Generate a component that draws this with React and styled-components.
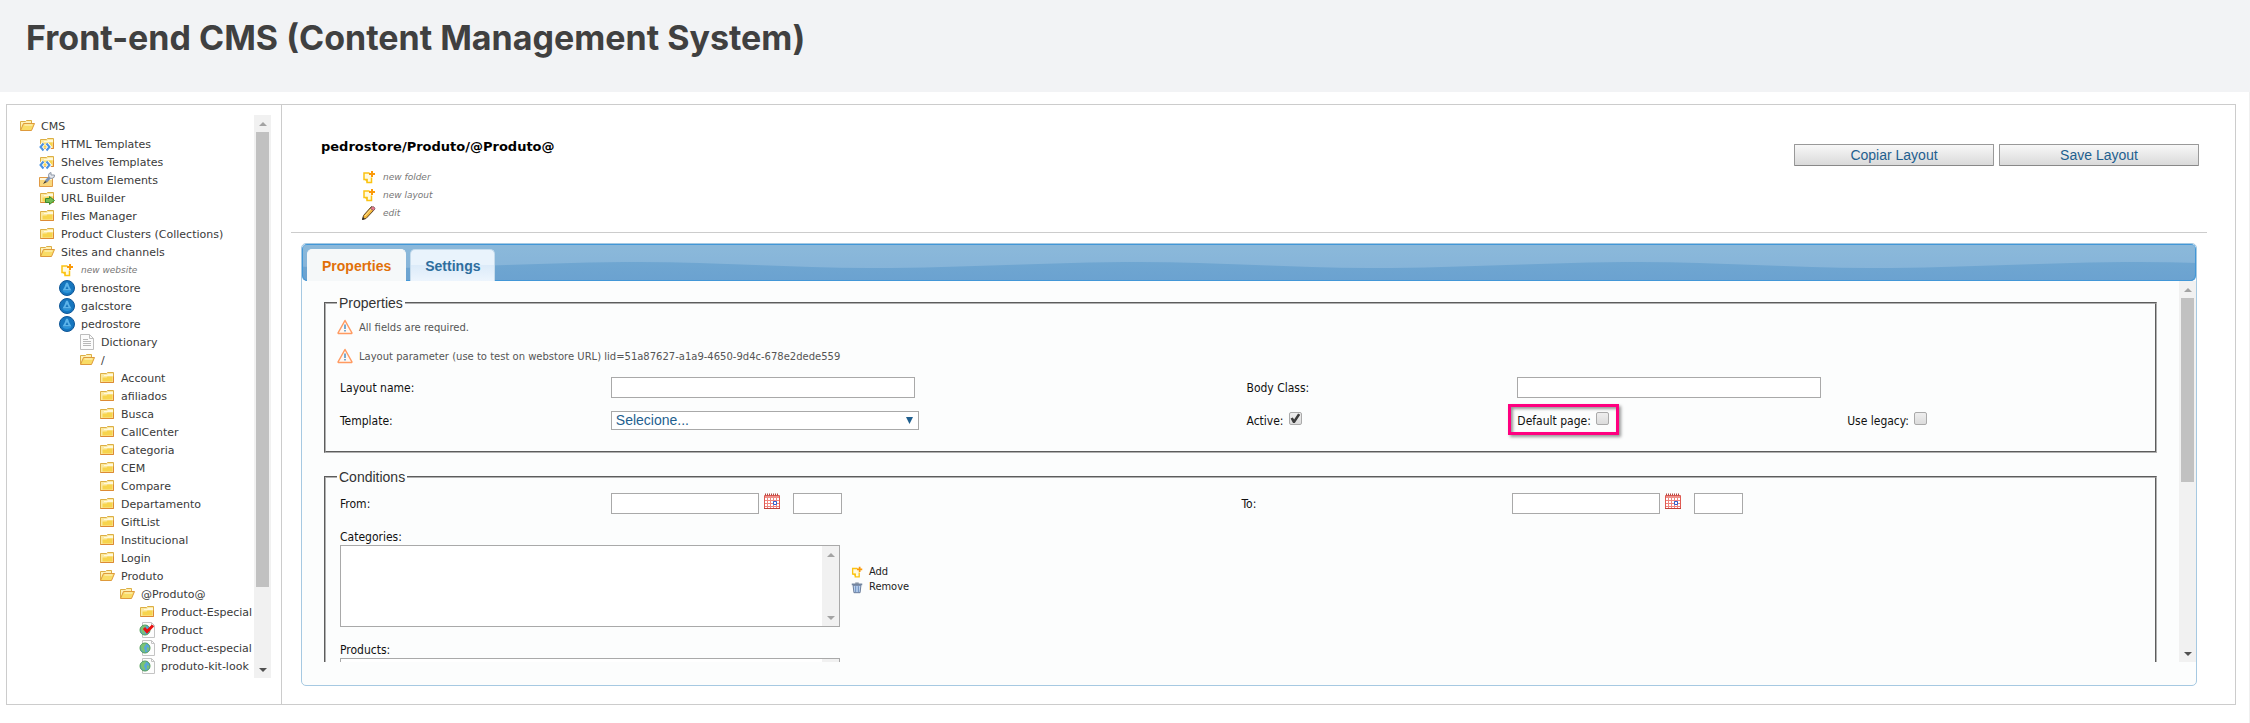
import React from "react";
import styled, { createGlobalStyle, css } from "styled-components";

const verdana = `Verdana, "DejaVu Sans", sans-serif`;
const tahoma = `Tahoma, "DejaVu Sans Condensed", "DejaVu Sans", sans-serif`;
const arial = `"Liberation Sans", Arial, sans-serif`;

const GlobalStyle = createGlobalStyle`
  *, *::before, *::after { box-sizing: border-box; }
  body { margin: 0; background: #fff; color: #3a3a3a; font-family: ${verdana}; font-size: 11px; }
  a { color: inherit; text-decoration: none; }
`;

/* ---------- page shell ---------- */

const Banner = styled.header`
  background: #f2f3f5;
  padding: 16px 26px 32px;
`;

const Title = styled.h1`
  margin: 0;
  color: #404040;
  font: 700 34px/44px Inter, sans-serif;
`;

const Page = styled.div`
  padding: 12px 13px 18px 6px;
  border-right: 1px solid #f0f0f0;
`;

const Frame = styled.div`
  display: flex;
  border: 1px solid #ccc;
`;

/* ---------- scroll bar ---------- */

const Bar = styled.div`
  flex: none;
  display: flex;
  flex-direction: column;
  width: 17px;
  background: #f1f1f1;
`;

const Track = styled.div`
  flex: 1;
  padding: 0 2px;
`;

const Thumb = styled.div`
  height: ${(p) => p.$size};
  background: #c1c1c1;
`;

const ArrowBox = styled.span`
  display: flex;
  align-items: center;
  justify-content: center;
  height: 17px;
`;

const Arrow = ({ down, color }) => (
  <ArrowBox>
    <svg width="8" height="4" viewBox="0 0 8 4" aria-hidden="true">
      <path d={down ? "M0 0h8L4 4z" : "M0 4h8L4 0z"} fill={color} />
    </svg>
  </ArrowBox>
);

const Scrollbar = ({ size }) => (
  <Bar aria-hidden="true">
    <Arrow color="#a3a3a3" />
    <Track>{size && <Thumb $size={size} />}</Track>
    <Arrow down color={size ? "#505050" : "#a3a3a3"} />
  </Bar>
);

/* ---------- icons ---------- */

const FolderShape = () => (
  <>
    <path d="M1.5 3.5v9h13v-10h-6l-1 1z" fill="#fbe9a0" stroke="#dcae45" />
    <path d="M2 5h3v1h9V4H9l-1 1z" fill="#fff8dc" />
    <path d="M3.500 7.500h4l1-1h5v5h-10z" fill="#f7d44c" />
    <path d="M1.500 12.500h13v-6" fill="none" stroke="#dd8a35" />
  </>
);

const icons = {
  folder: <FolderShape />,
  open: (
    <>
      <path d="M1.500 12V3.500h5l1-1h5v3" fill="#fdf0b4" stroke="#dcae45" />
      <path d="M4.500 5.500h11l-3 7h-11z" fill="#f9dc66" stroke="#de9a3c" />
      <path d="M5.500 7h8" stroke="#fff6cf" />
    </>
  ),
  template: (
    <>
      <FolderShape />
      <path d="M4.500 7.500L1.500 11l3 3.500M7.500 7.500l3 3.500-3 3.500" fill="none" stroke="#fff" strokeWidth="4" />
      <path d="M4.500 7.500L1.500 11l3 3.500M7.500 7.500l3 3.500-3 3.500" fill="none" stroke="#4b92e0" strokeWidth="2" />
    </>
  ),
  custom: (
    <>
      <path d="M.5 5.500h13v9H.5z" fill="#f9d77c" stroke="#e09a45" />
      <path d="M1 6h12v2H1z" fill="#fff6d8" />
      <path d="M7 9.500l4-4.500" stroke="#7b93b8" strokeWidth="3" />
      <path d="M15.500 3a3 3 0 1 1-3.500-2.500v2.500h2z" fill="#e4e8ee" stroke="#8d96a5" />
      <path d="M4 12l2-3 2 1z" fill="#333" />
    </>
  ),
  export: (
    <>
      <FolderShape />
      <path d="M6.500 8.500h4v-2l5 4-5 4v-2h-4z" fill="#74bd52" stroke="#3c8a2e" />
    </>
  ),
  add: (
    <>
      <path d="M8.500 4H3v6.500h3v3h4.500V8.500" fill="#fffbe0" stroke="#fbc313" strokeWidth="1.500" />
      <path d="M3 10h3.500v3.500z" fill="#fbc313" />
      <path d="M11 2v6M8 5h6" stroke="#fb9a0a" strokeWidth="2" />
    </>
  ),
  store: (
    <>
      <circle cx="8" cy="8" r="7.500" fill="#1676be" stroke="#0f5596" />
      <path d="M8 2.500c1.500 0 1.500 2.500 2.500 4.500l2 3.500h-9l2-3.500C6.500 5 6.500 2.500 8 2.500z" fill="#5cb4ea" />
      <path d="M3.500 11h9c-2 2.500-7 2.500-9 0z" fill="#2a94da" />
      <path d="M8 6l1.500 3h-3z" fill="#1676be" />
    </>
  ),
  doc: (
    <>
      <path d="M1.500.5h9l4 4v11h-13z" fill="#fcfcfc" stroke="#bdbdbd" />
      <path d="M10.500.5v4h4" fill="none" stroke="#bdbdbd" />
      <path d="M4 5.500h5M4 7.500h8M4 9.500h8M4 11.500h8" stroke="#b8b8b8" />
    </>
  ),
  web: (
    <>
      <path d="M3.500.5h9l3 3v12h-12z" fill="#fdfdfd" stroke="#c4c4c4" />
      <path d="M12.500.5v3h3" fill="none" stroke="#c4c4c4" />
      <circle cx="6" cy="8" r="5" fill="#58a6da" stroke="#4f9d4f" />
      <path d="M2 6c1-3 5-3 5-2S5 6 5 8s2 2 1 4c-3 0-4-3-4-6zM8 7l2 1c0 2-1 3-2 3z" fill="#7cc470" />
    </>
  ),
  pencil: (
    <>
      <path d="M1.500 14.500l1-4 8-9 3 3-8.500 9z" fill="#f5b83c" stroke="#5c4423" />
      <path d="M4 11l7-8" stroke="#ffe69a" />
      <path d="M10.500 2.500c1-2 4.500 0 3 2l-1 1-3-2z" fill="#f0788a" stroke="#87606c" />
      <path d="M1 15l1-3 2 2z" fill="#2b2b2b" />
    </>
  ),
  alert: (
    <>
      <path d="M8 1.500L15 14a1 1 0 0 1-.5.5h-13A1 1 0 0 1 1 14z" fill="#fff8f3" stroke="#ff9a61" strokeWidth="1.500" strokeLinejoin="round" />
      <path d="M8 5.500v4.500M8 11v1.500" stroke="#4d8fc4" strokeWidth="1.500" />
    </>
  ),
  calendar: (
    <>
      <path d="M.5 2.500h15v13H.5z" fill="#fff" stroke="#df5a52" />
      <path d="M1 3h14v2H1z" fill="#f0908a" />
      <path d="M1 1.500h14" stroke="#b04a44" strokeWidth="2" strokeDasharray="1 1" />
      <path d="M3.500 5v10M6.500 5v10M9.500 5v10M12.500 5v10M1 7.500h14M1 10.500h14M1 13.500h14" stroke="#f0857e" />
      <path d="M9.500 8.500h3v3h-3z" fill="#fff" stroke="#2f5fd0" />
      <path d="M0 15.500h16" stroke="#c0403a" />
    </>
  ),
  trash: (
    <>
      <path d="M3.500 6h9l-1 8.500h-7z" fill="#bcd2ee" stroke="#5b6f8f" />
      <path d="M6.500 7v7M9.500 7v7" stroke="#5f83b8" />
      <path d="M2 5h12" stroke="#7486a0" strokeWidth="2" />
      <path d="M6 3.500h4" stroke="#56657c" />
    </>
  ),
};
icons.checked = (
  <>
    {icons.web}
    <path d="M5 6l3 3.500 6-6" fill="none" stroke="#ea1010" strokeWidth="3" />
  </>
);

const IconSvg = styled.svg`
  flex: none;
  display: block;
`;

const Icon = ({ name, size = 16 }) => (
  <IconSvg width={size} height={size} viewBox="0 0 16 16" aria-hidden="true">
    {icons[name]}
  </IconSvg>
);

/* ---------- folder tree ---------- */

const Sidebar = styled.aside`
  flex: none;
  display: flex;
  align-items: flex-start;
  width: 275px;
  padding: 10px 10px 0 12px;
  border-right: 1px solid #ccc;
`;

const TreeView = styled.nav`
  flex: 1;
  display: flex;
  min-width: 0;
  height: 563px;
`;

const TreeList = styled.ul`
  flex: 1;
  min-width: 0;
  margin: 0;
  padding: 2px 0;
  list-style: none;
`;

const TreeRow = styled.li`
  padding-left: ${(p) => p.$level * 20}px;
`;

const hint = css`
  color: #777;
  font-size: 9px;
  font-style: italic;
`;

const IconLink = styled.a`
  display: flex;
  align-items: center;
  gap: 6px;
  height: 18px;
  white-space: nowrap;
  ${(p) => p.$hint && hint}
`;

const tree = [
  [0, "open", "CMS"],
  [1, "template", "HTML Templates"],
  [1, "template", "Shelves Templates"],
  [1, "custom", "Custom Elements"],
  [1, "export", "URL Builder"],
  [1, "folder", "Files Manager"],
  [1, "folder", "Product Clusters (Collections)"],
  [1, "open", "Sites and channels"],
  [2, "add", "new website"],
  [2, "store", "brenostore"],
  [2, "store", "galcstore"],
  [2, "store", "pedrostore"],
  [3, "doc", "Dictionary"],
  [3, "open", "/"],
  [4, "folder", "Account"],
  [4, "folder", "afiliados"],
  [4, "folder", "Busca"],
  [4, "folder", "CallCenter"],
  [4, "folder", "Categoria"],
  [4, "folder", "CEM"],
  [4, "folder", "Compare"],
  [4, "folder", "Departamento"],
  [4, "folder", "GiftList"],
  [4, "folder", "Institucional"],
  [4, "folder", "Login"],
  [4, "open", "Produto"],
  [5, "open", "@Produto@"],
  [6, "folder", "Product-Especial"],
  [6, "checked", "Product"],
  [6, "web", "Product-especial"],
  [6, "web", "produto-kit-look"],
];

/* ---------- main column ---------- */

const Main = styled.main`
  flex: 1;
  min-width: 0;
  padding-bottom: 18px;
`;

const Toolbar = styled.div`
  display: flex;
  justify-content: space-between;
  align-items: flex-start;
  margin: 0 28px 0 9px;
  padding: 32px 8px 10px 30px;
  border-bottom: 1px solid #ccc;
`;

const Path = styled.h2`
  margin: 0 0 11px;
  color: #000;
  font-size: 13px;
  line-height: 20px;
`;

const Actions = styled.div`
  padding-left: 40px;
`;

const Buttons = styled.div`
  display: flex;
  gap: 5px;
  padding-top: 7px;
`;

const Button = styled.button`
  width: 200px;
  height: 22px;
  padding: 0;
  border: 1px solid #999;
  border-bottom-color: #888;
  border-radius: 1px;
  background: linear-gradient(#f8f8f8, #dadada);
  color: #1f5f8f;
  font: 14px/20px ${arial};
`;

const TabPanel = styled.section`
  margin: 10px 38px 0 19px;
  padding-bottom: 23px;
  border: 1px solid #a6c9e2;
  border-radius: 5px;
  background: #fcfdfd;
`;

const TabBar = styled.div`
  position: relative;
  display: flex;
  align-items: flex-end;
  gap: 4px;
  height: 37px;
  padding: 0 4px;
  border: 1px solid #4297d7;
  border-bottom: 0;
  border-radius: 5px;
  background: linear-gradient(#73aad2, #6ba2d0);
  box-shadow: inset 0 -1px #4297d7;
`;

const Wave = styled.svg`
  position: absolute;
  top: 0;
  left: 0;
  width: 100%;
  height: 100%;
`;

const Tab = styled.button`
  position: relative;
  height: 32px;
  padding: 0 14px;
  border: 1px solid ${(p) => (p.$active ? "#f5f8f9" : "#c5dbec")};
  border-bottom: 0;
  border-radius: 5px 5px 0 0;
  background: ${(p) =>
    p.$active ? "#f5f8f9" : "linear-gradient(#e9f3fc 50%, #dcebf9 50%, #edf5fd)"};
  color: ${(p) => (p.$active ? "#e17009" : "#2e6e9e")};
  font: 700 14px/30px ${arial};
`;

const ScrollArea = styled.div`
  display: flex;
  height: 381px;
  overflow: hidden;
`;

const Form = styled.form`
  flex: 1;
  min-width: 0;
  padding: 13px 22px 0;
`;

const Group = styled.fieldset`
  min-width: 0;
  margin: 0 0 15px;
  padding: 0 11px 20px;
  border: 2px groove #b0b0b0;
`;

const Legend = styled.legend`
  padding: 0 2px;
  color: #333;
  font: 14px/18px ${arial};
`;

const Note = styled.p`
  display: flex;
  align-items: center;
  gap: 6px;
  margin: 0;
  padding-top: 1px;
  height: 29px;
  color: #555;
  font-size: 10px;
`;

const Fields = styled.div`
  display: grid;
  grid-template-columns: ${(p) => p.$columns};
  align-items: center;
  row-gap: 12px;
  padding: 7px 3px 0;
`;

const Label = styled.label`
  color: #111;
  font: 12px/16px ${tahoma};
`;

const TextInput = styled.input`
  width: ${(p) => p.$width}px;
  height: 21px;
  padding: 0 4px;
  border: 1px solid #a9a9a9;
  background: #fff;
`;

const SelectBox = styled.div`
  position: relative;
  width: 308px;
  svg {
    position: absolute;
    top: 6px;
    right: 6px;
  }
`;

const Select = styled.select`
  display: block;
  appearance: none;
  width: 100%;
  height: 19px;
  padding: 0 4px;
  border: 1px solid #a9a9a9;
  border-radius: 0;
  background: #fff;
  color: #1f5f8f;
  font: 14px/17px ${arial};
`;

const highlight = css`
  &::before {
    content: "";
    position: absolute;
    inset: -6px -10px -4px -9px;
    border: 3px solid #ff0080;
    box-shadow: 2px 2px 3px rgba(0, 0, 0, 0.4), inset 2px 2px 3px rgba(0, 0, 0, 0.4);
  }
`;

const CheckLabel = styled(Label)`
  position: relative;
  justify-self: start;
  display: flex;
  align-items: center;
  gap: 5px;
  height: 21px;
  ${(p) => p.$marked && highlight}
`;

const Checkbox = styled.input`
  appearance: none;
  width: 13px;
  height: 13px;
  margin: 0 0 4px;
  border: 1px solid #aaa;
  border-radius: 2px;
  background: linear-gradient(#eee, #dcdcdc);
  &:checked::before {
    content: "";
    display: block;
    height: 11px;
    background: #3c3c3c;
    clip-path: polygon(10% 50%, 30% 42%, 42% 60%, 78% 5%, 98% 16%, 48% 92%, 32% 90%);
  }
`;

const DateTime = styled.div`
  display: flex;
  align-items: flex-start;
  gap: 13px;
`;

const DateField = styled.div`
  display: flex;
  align-items: flex-start;
  gap: 5px;
`;

const IconButton = styled.button`
  padding: 0;
  border: 0;
  background: none;
`;

const ListField = styled.div`
  padding: 15px 3px 0;
  ${Label} {
    display: block;
  }
`;

const ListRow = styled.div`
  display: flex;
  gap: 10px;
`;

const ListFrame = styled.div`
  display: flex;
  width: 500px;
  height: 82px;
  border: 1px solid #a9a9a9;
  background: #fff;
`;

const ListBox = styled.select`
  flex: 1;
  min-width: 0;
  border: 0;
  background: none;
  overflow: hidden;
`;

const ListActions = styled.div`
  padding-top: 19px;
`;

const ListAction = styled.button`
  display: flex;
  align-items: center;
  gap: 5px;
  height: 15px;
  padding: 0;
  border: 0;
  background: none;
  color: #222;
  font: 11px/15px ${tahoma};
`;

const Moment = ({ id, label }) => (
  <>
    <Label htmlFor={id}>{label}</Label>
    <DateTime>
      <DateField>
        <TextInput id={id} $width={148} />
        <IconButton type="button" aria-label={`${label} calendar`}>
          <Icon name="calendar" />
        </IconButton>
      </DateField>
      <TextInput $width={49} aria-label={`${label} time`} />
    </DateTime>
  </>
);

const List = ({ id, label, children }) => (
  <ListField>
    <Label htmlFor={id}>{label}</Label>
    <ListRow>
      <ListFrame>
        <ListBox id={id} multiple />
        <Scrollbar />
      </ListFrame>
      {children}
    </ListRow>
  </ListField>
);

export default function App() {
  return (
    <>
      <GlobalStyle />
      <Banner>
        <Title>Front-end CMS (Content Management System)</Title>
      </Banner>
      <Page>
        <Frame>
          <Sidebar>
            <TreeView>
              <TreeList>
                {tree.map(([level, icon, text]) => (
                  <TreeRow key={text} $level={level}>
                    <IconLink href="#" $hint={icon === "add"}>
                      <Icon name={icon} />
                      {text}
                    </IconLink>
                  </TreeRow>
                ))}
              </TreeList>
              <Scrollbar size="86%" />
            </TreeView>
          </Sidebar>
          <Main>
            <Toolbar>
              <div>
                <Path>pedrostore/Produto/@Produto@</Path>
                <Actions>
                  <IconLink href="#" $hint><Icon name="add" />new folder</IconLink>
                  <IconLink href="#" $hint><Icon name="add" />new layout</IconLink>
                  <IconLink href="#" $hint><Icon name="pencil" />edit</IconLink>
                </Actions>
              </div>
              <Buttons>
                <Button type="button">Copiar Layout</Button>
                <Button type="button">Save Layout</Button>
              </Buttons>
            </Toolbar>
            <TabPanel>
              <TabBar role="tablist">
                <Wave aria-hidden="true">
                  <pattern id="gloss" x="68" width="500" height="36" patternUnits="userSpaceOnUse">
                    <path d="M0 23C100 23 170 17 270 17C350 17 420 23 500 23V0H0z" fill="#fff" fillOpacity="0.17" />
                  </pattern>
                  <rect width="100%" height="36" fill="url(#gloss)" />
                </Wave>
                <Tab type="button" role="tab" aria-selected="true" $active>Properties</Tab>
                <Tab type="button" role="tab" aria-selected="false">Settings</Tab>
              </TabBar>
              <ScrollArea>
                <Form>
                  <Group>
                    <Legend>Properties</Legend>
                    <Note><Icon name="alert" />All fields are required.</Note>
                    <Note>
                      <Icon name="alert" />
                      Layout parameter (use to test on webstore URL) lid=51a87627-a1a9-4650-9d4c-678e2dede559
                    </Note>
                    <Fields $columns="271fr 636fr 271fr 330fr 294fr">
                      <Label htmlFor="layout-name">Layout name:</Label>
                      <TextInput id="layout-name" $width={304} />
                      <Label htmlFor="body-class">Body Class:</Label>
                      <TextInput id="body-class" $width={304} />
                      <span />
                      <Label htmlFor="template">Template:</Label>
                      <SelectBox>
                        <Select id="template">
                          <option>Selecione...</option>
                        </Select>
                        <svg width="7" height="7" viewBox="0 0 7 7" aria-hidden="true">
                          <path d="M0 0h7L3.500 7z" fill="#1f5f8f" />
                        </svg>
                      </SelectBox>
                      <CheckLabel>Active:<Checkbox type="checkbox" defaultChecked /></CheckLabel>
                      <CheckLabel $marked>Default page:<Checkbox type="checkbox" /></CheckLabel>
                      <CheckLabel>Use legacy:<Checkbox type="checkbox" /></CheckLabel>
                    </Fields>
                  </Group>
                  <Group>
                    <Legend>Conditions</Legend>
                    <Fields $columns="271fr 631fr 271fr 629fr">
                      <Moment id="from" label="From:" />
                      <Moment id="to" label="To:" />
                    </Fields>
                    <List id="categories" label="Categories:">
                      <ListActions>
                        <ListAction type="button"><Icon name="add" size={14} />Add</ListAction>
                        <ListAction type="button"><Icon name="trash" size={14} />Remove</ListAction>
                      </ListActions>
                    </List>
                    <List id="products" label="Products:" />
                  </Group>
                </Form>
                <Scrollbar size="53%" />
              </ScrollArea>
            </TabPanel>
          </Main>
        </Frame>
      </Page>
    </>
  );
}
